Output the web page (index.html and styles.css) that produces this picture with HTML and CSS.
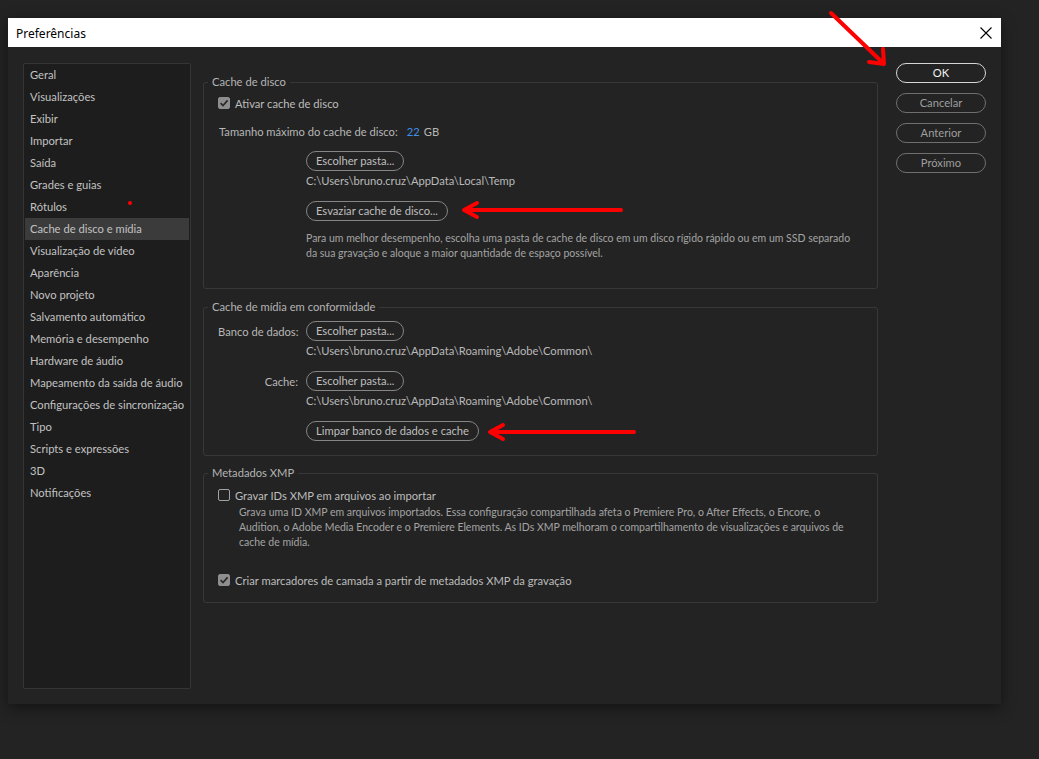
FILE: index.html
```html
<!DOCTYPE html>
<html lang="pt-BR">
<head>
<meta charset="utf-8">
<title>Preferências</title>
<link rel="stylesheet" href="styles.css">
</head>
<body>
<div class="dialog">
  <div class="titlebar">
    <span class="title">Preferências</span>
    <svg class="close" width="12" height="12" viewBox="0 0 12 12"><path d="M0.5 0.5 L11.5 11.5 M11.5 0.5 L0.5 11.5" stroke="#000" stroke-width="1.1" fill="none"/></svg>
  </div>
  <div class="main">
    <nav class="sidebar">
      <div class="item">Geral</div>
      <div class="item">Visualizações</div>
      <div class="item">Exibir</div>
      <div class="item">Importar</div>
      <div class="item">Saída</div>
      <div class="item">Grades e guias</div>
      <div class="item">Rótulos</div>
      <div class="item selected">Cache de disco e mídia</div>
      <div class="item">Visualização de vídeo</div>
      <div class="item">Aparência</div>
      <div class="item">Novo projeto</div>
      <div class="item">Salvamento automático</div>
      <div class="item">Memória e desempenho</div>
      <div class="item">Hardware de áudio</div>
      <div class="item">Mapeamento da saída de áudio</div>
      <div class="item">Configurações de sincronização</div>
      <div class="item">Tipo</div>
      <div class="item">Scripts e expressões</div>
      <div class="item">3D</div>
      <div class="item">Notificações</div>
    </nav>
    <div class="content">
      <fieldset class="group g1">
        <legend>Cache de disco</legend>
        <div class="gbody">
          <div class="check-row"><span class="cb checked"><svg width="12" height="12" viewBox="0 0 12 12"><path d="M2.6 6.2 L5 8.6 L9.6 3.4" stroke="#2a2a2a" stroke-width="1.7" fill="none"/></svg></span><span>Ativar cache de disco</span></div>
          <div class="size-row"><span>Tamanho máximo do cache de disco:</span><span class="num">22</span><span class="unit">GB</span></div>
          <div class="indent r-btn1"><span class="btn">Escolher pasta...</span></div>
          <div class="indent path">C:\Users\bruno.cruz\AppData\Local\Temp</div>
          <div class="indent r-btn2"><span class="btn">Esvaziar cache de disco...</span></div>
          <p class="indent desc">Para um melhor desempenho, escolha uma pasta de cache de disco em um disco rígido rápido ou em um SSD separado<br>da sua gravação e aloque a maior quantidade de espaço possível.</p>
        </div>
      </fieldset>
      <fieldset class="group g2">
        <legend>Cache de mídia em conformidade</legend>
        <div class="gbody">
          <div class="lrow"><span class="lbl">Banco de dados:</span><span class="btn">Escolher pasta...</span></div>
          <div class="indent path">C:\Users\bruno.cruz\AppData\Roaming\Adobe\Common\</div>
          <div class="lrow r-gap"><span class="lbl">Cache:</span><span class="btn">Escolher pasta...</span></div>
          <div class="indent path">C:\Users\bruno.cruz\AppData\Roaming\Adobe\Common\</div>
          <div class="indent r-gap"><span class="btn">Limpar banco de dados e cache</span></div>
        </div>
      </fieldset>
      <fieldset class="group g3">
        <legend>Metadados XMP</legend>
        <div class="gbody">
          <div class="check-row"><span class="cb"></span><span>Gravar IDs XMP em arquivos ao importar</span></div>
          <p class="desc xmp-desc">Grava uma ID XMP em arquivos importados. Essa configuração compartilhada afeta o Premiere Pro, o After Effects, o Encore, o<br>Audition, o Adobe Media Encoder e o Premiere Elements. As IDs XMP melhoram o compartilhamento de visualizações e arquivos de<br>cache de mídia.</p>
          <div class="check-row r-last"><span class="cb checked"><svg width="12" height="12" viewBox="0 0 12 12"><path d="M2.6 6.2 L5 8.6 L9.6 3.4" stroke="#2a2a2a" stroke-width="1.7" fill="none"/></svg></span><span>Criar marcadores de camada a partir de metadados XMP da gravação</span></div>
        </div>
      </fieldset>
    </div>
    <div class="actions">
      <span class="abtn primary">OK</span>
      <span class="abtn">Cancelar</span>
      <span class="abtn">Anterior</span>
      <span class="abtn">Próximo</span>
    </div>
  </div>
</div>
<svg class="annot" width="1039" height="759" viewBox="0 0 1039 759">
  <g stroke="#ff0000" stroke-width="4" fill="none" stroke-linecap="round" stroke-linejoin="round">
    <path d="M466 210 L621 210"/>
    <path d="M477 203 L464 210 L477 217"/>
    <path d="M492 432 L634 432"/>
    <path d="M503 425 L490 432 L503 439"/>
    <path d="M831 13 L882 62"/>
    <path d="M869 62 L884 64 L883 49"/>
  </g>
  <circle cx="130" cy="203" r="2" fill="#ff0000"/>
</svg>
</body>
</html>
```
FILE: styles.css
```css
html, body {
  margin: 0;
  padding: 0;
}
body {
  background: #232323;
  width: 1039px;
  height: 759px;
  overflow: hidden;
  position: relative;
  padding: 18px 0 0 8px;
  box-sizing: border-box;
  font-family: Lato, "Noto Sans", sans-serif;
  font-size: 11.2px;
}
.dialog {
  width: 993px;
  height: 686px;
  background: #232323;
  box-shadow: 0 4px 14px rgba(0, 0, 0, 0.45);
  display: flex;
  flex-direction: column;
}
.titlebar {
  height: 29px;
  background: #ffffff;
  display: flex;
  align-items: center;
  justify-content: space-between;
  padding: 0 9px 0 8px;
  flex: none;
}
.title {
  color: #000;
  font-family: "Noto Sans", sans-serif;
  font-size: 12px;
  margin-top: 1px;
}
.close {
  display: block;
  margin-top: 1px;
}
.main {
  display: flex;
  align-items: flex-start;
  padding: 16px 0 0 15px;
}
.sidebar {
  width: 168px;
  height: 626px;
  box-sizing: border-box;
  background: #1d1d1d;
  border: 1px solid #353535;
  border-radius: 2px;
  flex: none;
}
.item {
  height: 22px;
  line-height: 22px;
  padding-left: 6px;
  color: #c2c2c2;
  white-space: nowrap;
}
.item.selected {
  background: #3b3b3b;
  margin: 0 1px;
  padding-left: 5px;
}
.content {
  width: 675px;
  margin-left: 12px;
  flex: none;
}
.group {
  margin: 0;
  padding: 0;
  border: 1px solid #383838;
  border-radius: 3px;
  min-width: 0;
}
.group legend {
  margin-left: 4px;
  padding: 0 4px;
  line-height: 16px;
  color: #b4b4b4;
}
.g1 { margin-top: 11px; }
.g2 { margin-top: 10px; }
.g3 { margin-top: 9px; }
.gbody {
  padding: 0 14px;
  color: #b9b9b9;
}
.g1 .gbody { padding-top: 3px; padding-bottom: 27px; }
.g2 .gbody { padding-top: 6px; padding-bottom: 14px; }
.g3 .gbody { padding-top: 4px; padding-bottom: 12px; }
.check-row {
  height: 20px;
  display: flex;
  align-items: center;
  gap: 5px;
  color: #bdbdbd;
  white-space: nowrap;
}
.cb {
  width: 12px;
  height: 12px;
  box-sizing: border-box;
  border: 1.5px solid #a2a2a2;
  border-radius: 2px;
  flex: none;
  display: block;
}
.cb.checked {
  background: #8e8e8e;
  border-color: #8e8e8e;
}
.cb.checked svg {
  display: block;
  margin: -1.5px;
}
.size-row {
  margin-top: 8px;
  height: 20px;
  display: flex;
  align-items: center;
  padding-left: 1px;
  color: #b7b7b7;
  white-space: nowrap;
}
.size-row .num {
  color: #3d90e8;
  margin-left: 9px;
}
.size-row .unit {
  margin-left: 4px;
}
.indent {
  margin-left: 88px;
}
.r-btn1 { margin-top: 10px; }
.r-btn2 { margin-top: 12px; }
.r-gap { margin-top: 12px; }
.btn {
  display: inline-block;
  box-sizing: border-box;
  height: 20px;
  line-height: 18px;
  padding: 0 9px;
  border: 1px solid #858585;
  border-radius: 10px;
  color: #bfbfbf;
  vertical-align: top;
  white-space: nowrap;
}
.path {
  margin-top: 2px;
  line-height: 16px;
  color: #b9b9b9;
  white-space: nowrap;
}
.desc {
  margin: 10px 0 0 88px;
  font-size: 10.5px;
  line-height: 15px;
  color: #a4a4a4;
  white-space: nowrap;
}
.lrow {
  display: flex;
  align-items: center;
  height: 20px;
}
.lbl {
  width: 88px;
  box-sizing: border-box;
  padding-right: 8px;
  text-align: right;
  color: #b7b7b7;
  white-space: nowrap;
  flex: none;
}
.xmp-desc {
  margin: 0 0 0 21px;
}
.r-last {
  margin-top: 20px;
}
.actions {
  margin-left: 18px;
  display: flex;
  flex-direction: column;
  gap: 10px;
  flex: none;
}
.abtn {
  display: block;
  width: 90px;
  height: 20px;
  box-sizing: border-box;
  border: 1px solid #6f6f6f;
  border-radius: 10px;
  line-height: 18px;
  text-align: center;
  color: #9e9e9e;
}
.abtn.primary {
  border-color: #d6d6d6;
  color: #f2f2f2;
}
.annot {
  position: absolute;
  left: 0;
  top: 0;
  pointer-events: none;
}
```
